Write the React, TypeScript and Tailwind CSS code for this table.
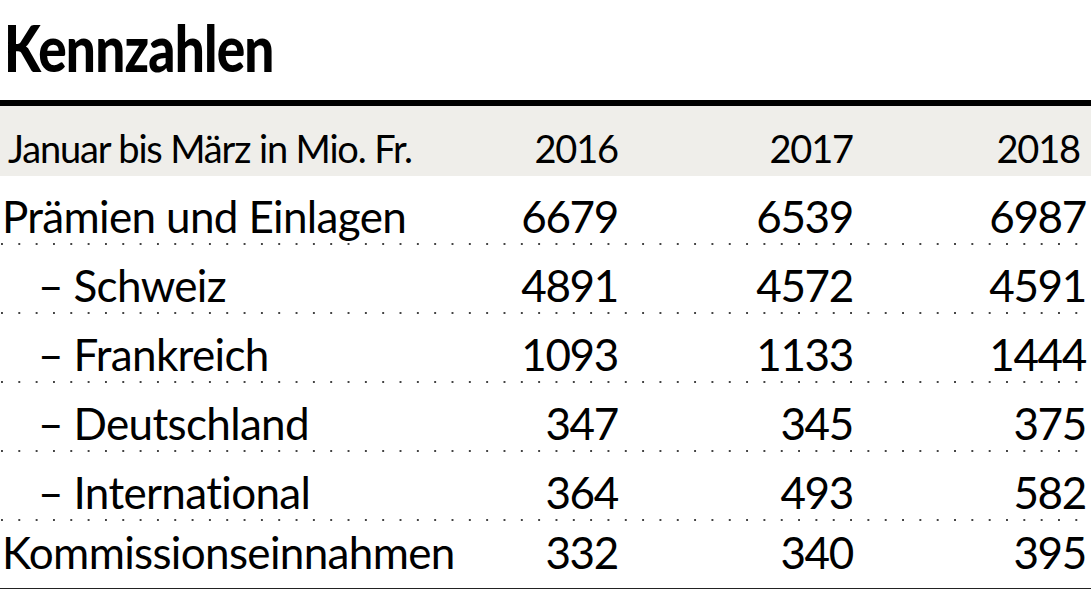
const rows: { label: string; sub?: boolean; values: string[] }[] = [
  { label: 'Prämien und Einlagen', values: ['6679', '6539', '6987'] },
  { label: 'Schweiz', sub: true, values: ['4891', '4572', '4591'] },
  { label: 'Frankreich', sub: true, values: ['1093', '1133', '1444'] },
  { label: 'Deutschland', sub: true, values: ['347', '345', '375'] },
  { label: 'International', sub: true, values: ['364', '493', '582'] },
  { label: 'Kommissionseinnahmen', values: ['332', '340', '395'] },
];

function Dots() {
  return (
    <div className="h-[2px] w-full bg-[linear-gradient(to_right,#444_2px,transparent_2px)] bg-[length:17.33px_2px] bg-[position:1px_0]" />
  );
}

export default function App() {
  return (
    <div className="w-[1091px] h-[611px] bg-white text-black font-['Lato','Open_Sans',sans-serif] overflow-hidden">
      <div className="h-[100px] flex items-end pb-[20px] pl-[4px]">
        <h1 className="text-[64px] leading-none font-black tracking-[-0.015em] origin-left scale-x-[0.83] whitespace-nowrap">
          Kennzahlen
        </h1>
      </div>
      <div className="h-[6px] bg-black" />

      <div className="h-[70px] bg-[#efeeea] grid grid-cols-[448px_170px_235px_233px] items-end pb-[9px] text-[38px] leading-none">
        <div className="pl-[8px] whitespace-nowrap tracking-[-0.03em]">Januar bis März in Mio. Fr.</div>
        <div className="text-right tracking-[-0.03em]">2016</div>
        <div className="text-right tracking-[-0.03em]">2017</div>
        <div className="text-right pr-[6px] tracking-[-0.03em]">2018</div>
      </div>

      {rows.map((r, i) => {
        const last = i === rows.length - 1;
        return (
          <div key={r.label}>
            <div
              className={`h-[67px] grid grid-cols-[448px_170px_235px_233px] items-end text-[44px] leading-none ${last ? 'pb-[14px]' : 'pb-[5px]'}`}
            >
              <div className={`whitespace-nowrap tracking-[-0.015em] ${r.sub ? 'pl-[38px]' : 'pl-[2px]'}`}>
                {r.sub ? '– ' : ''}
                {r.label}
              </div>
              {r.values.map((v, j) => (
                <div key={j} className="text-right tracking-[-0.03em]">{v}</div>
              ))}
            </div>
            {last ? <div className="h-[1px] bg-[#222]" /> : <Dots />}
          </div>
        );
      })}
    </div>
  );
}
